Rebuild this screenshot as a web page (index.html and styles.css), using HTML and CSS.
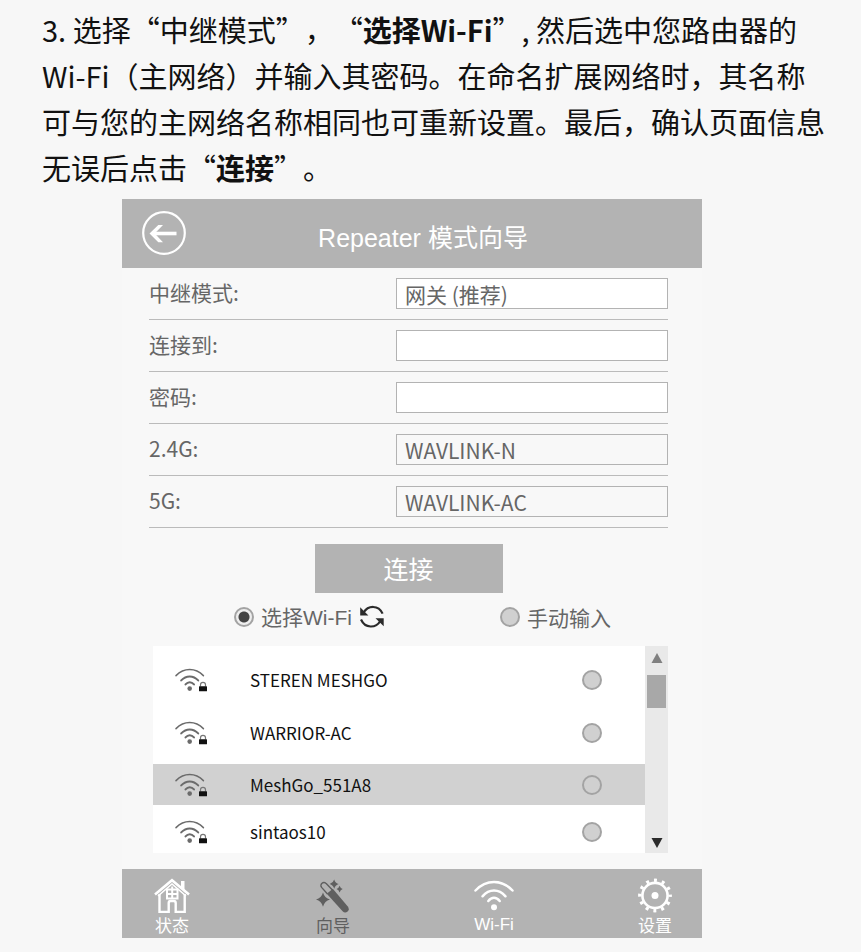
FILE: index.html
```html
<!DOCTYPE html>
<html lang="zh-CN">
<head>
<meta charset="utf-8">
<meta name="viewport" content="width=device-width, initial-scale=1">
<title>Repeater 模式向导</title>
<link rel="stylesheet" href="styles.css">
</head>
<body>
<svg class="defs" aria-hidden="true">
  <symbol id="wifi-lock" viewBox="0 0 33 24">
    <g fill="none" stroke="#6b6b6b" stroke-linecap="round">
      <path stroke-width="1.500" d="M1 7.600C9 -.4 20.400 -.4 28.400 7.600"/>
      <path stroke-width="2" d="M6.200 12.400c5-5.300 12-5.300 17 0"/>
      <path stroke-width="2" d="M10.500 16.400c2.500-2.900 6-2.900 8.500 0"/>
    </g>
    <circle cx="14.700" cy="20.600" r="2.300" fill="#6b6b6b"/>
    <path d="M25.500 18.500v-1.700a2.500 2.500 0 0 1 5 0v1.700" fill="none" stroke="#777" stroke-width="1.200"/>
    <rect x="24" y="18.200" width="8" height="5" rx=".5" fill="#111"/>
  </symbol>
</svg>

<main class="page">
  <p class="step">3. 选择“中继模式”，“<strong>选择Wi-Fi</strong>”, 然后选中您路由器的<span class="word">Wi-Fi</span>（主网络）并输入其密码。在命名扩展网络时，其名称可与您的主网络名称相同也可重新设置。最后，确认页面信息无误后点击“<strong>连接</strong>”。</p>

  <section class="panel">
    <header class="bar">
      <button class="back" type="button" aria-label="返回">
        <svg width="44" height="44" viewBox="0 0 44 44" fill="none" stroke="#fff">
          <circle cx="22" cy="22" r="20.800" stroke-width="2.200"/>
          <path stroke-width="3.600" d="M34.500 22.500H10"/>
          <path fill="#fff" stroke="none" d="M7.500 22.500 16.300 14h4.700l-8.300 8.500 8.300 8.800h-4.700z"/>
        </svg>
      </button>
      <h1 class="title">Repeater 模式向导</h1>
    </header>

    <form class="form">
      <div class="row">
        <label for="mode">中继模式:</label>
        <select id="mode" class="field"><option>网关 (推荐)</option></select>
      </div>
      <div class="row">
        <label for="target">连接到:</label>
        <input id="target" class="field" type="text">
      </div>
      <div class="row">
        <label for="password">密码:</label>
        <input id="password" class="field" type="password">
      </div>
      <div class="row">
        <label for="ssid24">2.4G:</label>
        <input id="ssid24" class="field plain" type="text" value="WAVLINK-N">
      </div>
      <div class="row">
        <label for="ssid5">5G:</label>
        <input id="ssid5" class="field plain" type="text" value="WAVLINK-AC">
      </div>

      <button class="connect" type="button">连接</button>

      <div class="source">
        <div class="choice">
          <input class="radio" type="radio" name="source" id="pick" checked>
          <label for="pick">选择<span class="latin">Wi-Fi</span></label>
          <button class="refresh" type="button" aria-label="刷新">
            <svg width="26" height="24" viewBox="0 0 26 24">
              <g fill="none" stroke="#2b2b2b" stroke-width="2.200">
                <path d="M4.500 7.800C9 .2 19.500-.4 23.600 8.600"/>
                <path d="M2 14.500c4.200 9.200 14.800 9 19.500 1.200"/>
              </g>
              <path fill="#2b2b2b" d="M1.200 2.300v8.200h8.200zM24.700 21.300v-8h-8.200z"/>
            </svg>
          </button>
        </div>
        <div class="choice">
          <input class="radio" type="radio" name="source" id="manual">
          <label for="manual">手动输入</label>
        </div>
      </div>

      <div class="networks">
        <div class="list">
          <label class="network">
            <svg class="signal"><use href="#wifi-lock"/></svg>
            <span>STEREN MESHGO</span>
            <input class="radio" type="radio" name="network">
          </label>
          <label class="network">
            <svg class="signal"><use href="#wifi-lock"/></svg>
            <span>WARRIOR-AC</span>
            <input class="radio" type="radio" name="network">
          </label>
          <label class="network current">
            <svg class="signal"><use href="#wifi-lock"/></svg>
            <span>MeshGo_551A8</span>
            <input class="radio" type="radio" name="network">
          </label>
          <label class="network">
            <svg class="signal"><use href="#wifi-lock"/></svg>
            <span>sintaos10</span>
            <input class="radio" type="radio" name="network">
          </label>
        </div>
        <div class="scroll" aria-hidden="true">
          <svg width="12" height="10" viewBox="0 0 12 10"><path fill="#808080" d="M6 0l5.500 10H.5z"/></svg>
          <div class="thumb"></div>
          <svg class="down" width="12" height="10" viewBox="0 0 12 10"><path fill="#2b2b2b" d="M6 10L.5 0h11z"/></svg>
        </div>
      </div>
    </form>

    <nav class="tabs">
      <a class="tab" href="#status">
        <svg width="36" height="36" viewBox="0 0 36 36" fill="none" stroke="#fff">
          <path stroke-width="2.600" d="M1 17.500 18 3.200l17 14.300"/>
          <path stroke-width="1.600" d="M4 19 18 7l14 12"/>
          <path stroke-width="2.400" d="M5.500 17v18h9.200v-9q0-2 2-2h3q2 0 2 2v9h9V17"/>
          <path fill="#fff" stroke="none" d="M27 4h3.500v9L27 10.200z"/>
          <path stroke-width="2" d="M13 12.500h10.500v9H13zM18.200 9.500v12M13 17h10.500"/>
        </svg>
        <span>状态</span>
      </a>
      <a class="tab active" href="#wizard" aria-current="page">
        <svg width="36" height="36" viewBox="0 0 36 36">
          <path fill="none" stroke="#5f5f5f" stroke-width="1.400" d="M12.500 17 6.600 10.400a2.900 2.900 0 0 1 4.600-3.800L17.400 13"/>
          <path fill="#5f5f5f" d="M11.800 16.800 17.800 11.800 32.800 29.600q2 3-.2 5-2.600 2-5-.3z"/>
          <path fill="#5f5f5f" d="M8 15.500q1.600 5.700 7 7-5.400 1.500-7 7.200-1.600-5.700-7-7.200 5.400-1.300 7-7zM19.200 2.500q1.100 3.600 4.500 4.600-3.400 1-4.500 4.600-1.100-3.600-4.500-4.600 3.400-1 4.500-4.600zM24.600 8.800q.8 2.500 3.100 3.300-2.300.8-3.100 3.300-.8-2.500-3.100-3.300 2.300-.8 3.100-3.300z"/>
        </svg>
        <span>向导</span>
      </a>
      <a class="tab latin" href="#wifi">
        <svg width="40" height="36" viewBox="0 0 40 36" fill="none" stroke="#fff" stroke-linecap="round" stroke-width="2.500">
          <path d="M1.500 13.500c10.800-11.300 26.200-11.300 37 0"/>
          <path d="M8.500 19.300c6.700-7.600 16.300-7.600 23 0"/>
          <path d="M14.300 24c3.400-4.200 8-4.200 11.400 0"/>
          <circle cx="20" cy="30.300" r="3" fill="#fff" stroke="none"/>
        </svg>
        <span>Wi-Fi</span>
      </a>
      <a class="tab" href="#settings">
        <svg width="36" height="36" viewBox="0 0 36 36" fill="none" stroke="#fff">
          <circle cx="18" cy="18.500" r="12.600" stroke-width="2.600"/>
          <circle cx="18" cy="18.500" r="15.200" stroke-width="3.400" stroke-dasharray="3 4.958" stroke-dashoffset="1.500"/>
          <circle cx="18" cy="18.500" r="3.500" fill="#fff" stroke="none"/>
        </svg>
        <span>设置</span>
      </a>
    </nav>
  </section>
</main>
</body>
</html>
```
FILE: styles.css
```css
* {
  box-sizing: border-box;
}

body {
  margin: 0;
  background: #f7f7f7;
  color: #111;
  font-family: "Noto Sans CJK SC", sans-serif;
}

button,
input,
select {
  margin: 0;
  padding: 0;
  border: 0;
  border-radius: 0;
  background: none;
  color: inherit;
  font: inherit;
  appearance: none;
}

svg {
  display: block;
}

.defs {
  display: none;
}

.page {
  padding: 6px 30px 14px 42px;
}

.step {
  margin: 0 0 9px;
  font-size: 29px;
  line-height: 46px;
  text-spacing-trim: space-all;
}

.word {
  white-space: nowrap;
}

.panel {
  max-width: 580px;
  margin-left: 80px;
  background: #f8f8f8;
}

.bar {
  display: flex;
  align-items: center;
  padding: 12px 42px 13px 20px;
  background: #b3b3b3;
  color: #fff;
}

.title {
  flex: 1;
  margin: 0;
  padding-top: 10px;
  font: 400 25px/34px "Liberation Sans", "Noto Sans CJK SC", sans-serif;
  text-align: center;
}

.form {
  padding: 0 34px 16px 27px;
  color: #666;
  font-size: 21px;
  line-height: 28px;
}

.row {
  display: flex;
  align-items: flex-start;
  justify-content: space-between;
  padding: 10px 0;
  border-bottom: 1px solid #bbb;
}

.field {
  width: 272px;
  height: 31px;
  padding: 0 8px;
  border: 1px solid #b3b3b3;
  background: #fff;
}

.plain {
  background: transparent;
}

.connect {
  display: block;
  width: 188px;
  margin: 16px auto 9px;
  background: #b3b3b3;
  color: #fff;
  font-size: 25px;
  line-height: 49px;
}

.source {
  display: flex;
  justify-content: space-between;
  padding: 0 57px 0 85px;
}

.choice {
  display: flex;
  align-items: center;
  gap: 7px;
}

.radio {
  flex: none;
  width: 20px;
  height: 20px;
  border: 2px solid #a3a3a3;
  border-radius: 50%;
  background: #d0d0d0;
}

.radio:checked {
  background: radial-gradient(circle, #444 5px, #eee 6px);
}

.networks {
  display: flex;
  height: 207px;
  margin: 14px 0 0 4px;
  background: #fff;
}

.list {
  flex: 1;
  padding-top: 7px;
  overflow: hidden;
  color: #111;
  font-size: 17px;
}

.network {
  display: flex;
  align-items: center;
  height: 53px;
  padding: 0 43px 0 22px;
}

.network span {
  flex: 1;
  padding-left: 42px;
}

.current {
  height: 41px;
  margin-top: 5px;
  background: #d1d1d1;
}

.signal {
  width: 33px;
  height: 24px;
}

.scroll {
  display: flex;
  flex-direction: column;
  align-items: center;
  width: 23px;
  padding: 7px 0 5px;
  background: #e9e9e9;
}

.thumb {
  width: 19px;
  height: 33px;
  margin-top: 12px;
  background: #a8a8a8;
}

.down {
  margin-top: auto;
}

.tabs {
  display: flex;
  justify-content: space-between;
  padding: 8px 27px 1px 30px;
  background: #b3b3b3;
}

.tab {
  display: flex;
  flex-direction: column;
  align-items: center;
  width: 40px;
  color: #fff;
  font-size: 17px;
  line-height: 24px;
  text-decoration: none;
  white-space: nowrap;
}

.active {
  color: #5f5f5f;
}

.latin {
  font-family: "Liberation Sans", sans-serif;
}
```
